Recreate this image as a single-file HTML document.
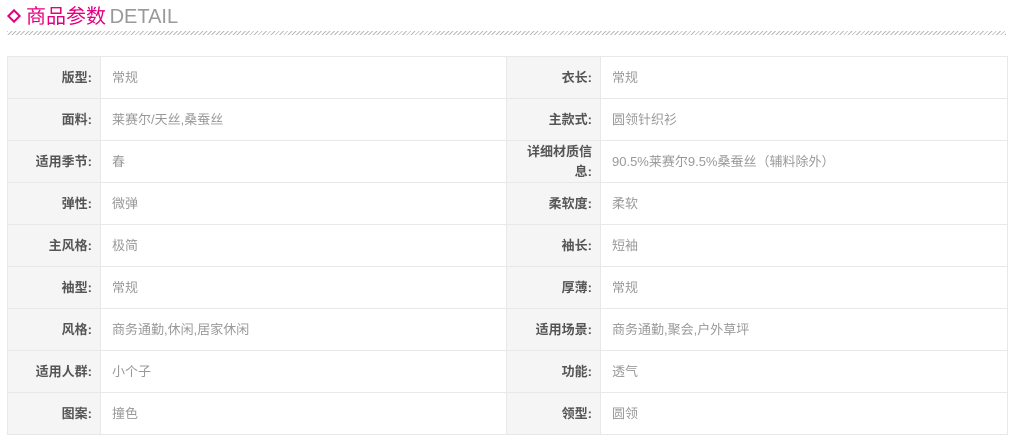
<!DOCTYPE html>
<html><head><meta charset="utf-8"><style>
body{margin:0;background:#fff;font-family:"Liberation Sans","Noto Sans CJK SC",sans-serif;width:1010px;height:427px;overflow:hidden;position:relative}
.h{position:absolute;left:7px;top:3px;font-size:20px;line-height:28px;color:#e4007f;white-space:nowrap}
.d{display:inline-block;width:6px;height:6px;border:2px solid #e4007f;transform:rotate(45deg);margin:0 7px 3px 2px;vertical-align:middle}
.h span.e{color:#999;margin-left:-2px}
.hatch{position:absolute;left:7px;top:31px;width:999px;height:4px;background:repeating-linear-gradient(135deg,#bbb 0 1px,transparent 1px 3px)}
table{position:absolute;left:7px;top:56px;border-collapse:collapse;width:1000px;table-layout:fixed}
td{border:1px solid #e8e8e8;height:41px;padding:0;font-size:13px;line-height:18px}
td.l{background:#f5f5f5;text-align:right;padding-right:8px;padding-left:10px;font-weight:bold;color:#555}
td.v{color:#999;padding-left:11px}
td.l2{line-height:20px}
</style></head><body>
<div class="h"><span class="d"></span>商品参数 <span class="e">DETAIL</span></div>
<div class="hatch"></div>
<table>
<colgroup><col style="width:93px"><col style="width:406px"><col style="width:94px"><col style="width:407px"></colgroup>
<tr><td class="l">版型:</td><td class="v">常规</td><td class="l">衣长:</td><td class="v">常规</td></tr>
<tr><td class="l">面料:</td><td class="v">莱赛尔/天丝,桑蚕丝</td><td class="l">主款式:</td><td class="v">圆领针织衫</td></tr>
<tr><td class="l">适用季节:</td><td class="v">春</td><td class="l l2">详细材质信<br>息:</td><td class="v">90.5%莱赛尔9.5%桑蚕丝（辅料除外）</td></tr>
<tr><td class="l">弹性:</td><td class="v">微弹</td><td class="l">柔软度:</td><td class="v">柔软</td></tr>
<tr><td class="l">主风格:</td><td class="v">极简</td><td class="l">袖长:</td><td class="v">短袖</td></tr>
<tr><td class="l">袖型:</td><td class="v">常规</td><td class="l">厚薄:</td><td class="v">常规</td></tr>
<tr><td class="l">风格:</td><td class="v">商务通勤,休闲,居家休闲</td><td class="l">适用场景:</td><td class="v">商务通勤,聚会,户外草坪</td></tr>
<tr><td class="l">适用人群:</td><td class="v">小个子</td><td class="l">功能:</td><td class="v">透气</td></tr>
<tr><td class="l">图案:</td><td class="v">撞色</td><td class="l">领型:</td><td class="v">圆领</td></tr>
</table>
</body></html>
